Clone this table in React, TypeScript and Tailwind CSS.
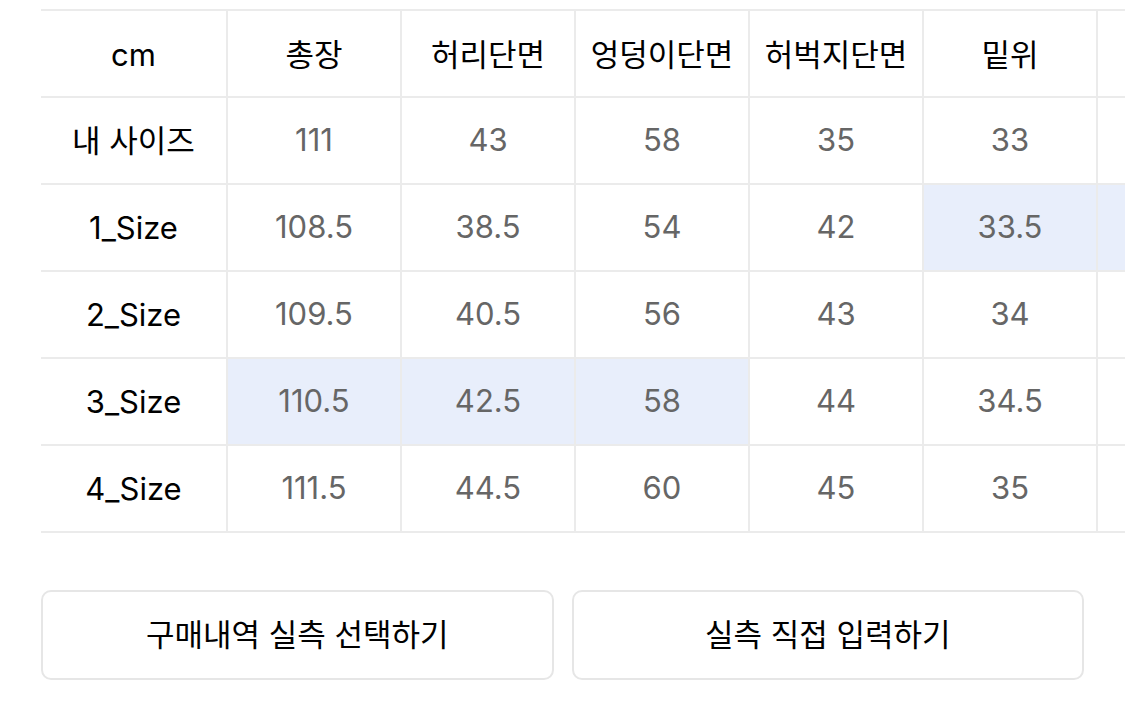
import React from 'react';

const headers = ['cm', '총장', '허리단면', '엉덩이단면', '허벅지단면', '밑위'];

interface SizeRow {
  label: string;
  values: string[];
  highlight: number[];
}

// 마지막 열은 화면 밖으로 잘려서 값이 보이지 않음
const rows: SizeRow[] = [
  { label: '내 사이즈', values: ['111', '43', '58', '35', '33'], highlight: [] },
  { label: '1_Size', values: ['108.5', '38.5', '54', '42', '33.5'], highlight: [4, 5] },
  { label: '2_Size', values: ['109.5', '40.5', '56', '43', '34'], highlight: [] },
  { label: '3_Size', values: ['110.5', '42.5', '58', '44', '34.5'], highlight: [0, 1, 2] },
  { label: '4_Size', values: ['111.5', '44.5', '60', '45', '35'], highlight: [] },
];

const font = { fontFamily: 'Inter, "Noto Sans CJK KR", sans-serif' };

export default function App() {
  return (
    <div className="w-[1125px] h-[720px] bg-white overflow-hidden" style={font}>
      <div className="pl-[41px] pt-[9px] overflow-hidden">
        <div className="grid grid-cols-[187px_repeat(6,174px)] w-max border-t-2 border-[#ebebeb]">
          {[...headers, ''].map((h, i) => (
            <div
              key={i}
              className="h-[87px] flex items-center justify-center border-b-2 border-r-2 border-[#ebebeb] text-[31px] text-black pt-[3px]"
            >
              {h}
            </div>
          ))}
          {rows.map((row) => (
            <React.Fragment key={row.label}>
              <div className="h-[87px] flex items-center justify-center border-b-2 border-r-2 border-[#ebebeb] text-[31px] text-black pt-[2px]">
                {row.label}
              </div>
              {[...row.values, ''].map((v, j) => (
                <div
                  key={j}
                  className={`h-[87px] flex items-center justify-center border-b-2 border-r-2 border-[#ebebeb] text-[31px] text-[#666] ${row.highlight.includes(j) ? 'bg-[#e8eefb]' : 'bg-white'}`}
                >
                  {v}
                </div>
              ))}
            </React.Fragment>
          ))}
        </div>
      </div>

      <div className="flex gap-[18px] px-[41px] mt-[57px]">
        <button className="flex-1 h-[90px] rounded-[10px] border-2 border-[#e6e6e6] bg-white text-[31px] text-black">
          구매내역 실측 선택하기
        </button>
        <button className="flex-1 h-[90px] rounded-[10px] border-2 border-[#e6e6e6] bg-white text-[31px] text-black">
          실측 직접 입력하기
        </button>
      </div>
    </div>
  );
}
